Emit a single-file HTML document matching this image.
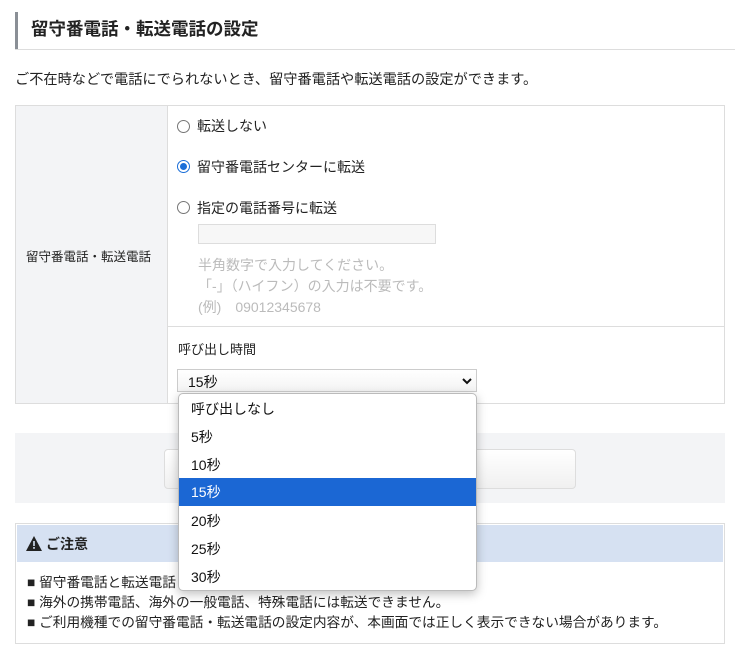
<!DOCTYPE html>
<html><head><meta charset="utf-8"><style>
*{margin:0;padding:0;box-sizing:border-box}
body{width:735px;height:653px;background:#fff;font-family:"Liberation Sans","Noto Sans CJK JP",sans-serif;color:#222;position:relative;overflow:hidden;font-size:14px}
.a{position:absolute;white-space:nowrap}
.radio{position:absolute;width:13px;height:13px;border:1px solid #767676;border-radius:50%;background:#fff}
.radio.on{border:1px solid #1a6ed8}
.radio.on::after{content:"";position:absolute;left:2px;top:2px;width:7px;height:7px;border-radius:50%;background:#1a6ed8}
.hint{color:#bbb;font-size:14px}
.opt{position:absolute;left:0;width:100%;height:28px;line-height:28px;padding-left:12px;font-size:14px;color:#111}
</style></head><body>
<div class="a" style="left:15px;top:12px;width:3px;height:38px;background:#8a8f96"></div>
<div class="a" style="left:15px;top:49px;width:720px;height:1px;background:#ddd"></div>
<div class="a" style="left:31px;top:16px;font-size:17.5px;font-weight:bold;color:#222">留守番電話・転送電話の設定</div>
<div class="a" style="left:15px;top:69px;font-size:14.2px">ご不在時などで電話にでられないとき、留守番電話や転送電話の設定ができます。</div>

<div class="a" style="left:15px;top:105px;width:710px;height:299px;border:1px solid #ddd"></div>
<div class="a" style="left:16px;top:106px;width:152px;height:297px;background:#f3f4f6;border-right:1px solid #ddd"></div>
<div class="a" style="left:26px;top:246px;font-size:12.5px">留守番電話・転送電話</div>
<div class="a" style="left:168px;top:326px;width:557px;height:1px;background:#ddd"></div>

<div class="radio" style="left:177px;top:120px"></div>
<div class="a" style="left:197px;top:116px">転送しない</div>
<div class="radio on" style="left:177px;top:160px"></div>
<div class="a" style="left:197px;top:157px">留守番電話センターに転送</div>
<div class="radio" style="left:177px;top:201px"></div>
<div class="a" style="left:197px;top:198px">指定の電話番号に転送</div>
<div class="a" style="left:198px;top:224px;width:238px;height:20px;border:1px solid #ddd;background:#f7f7f7"></div>
<div class="a hint" style="left:198px;top:255px">半角数字で入力してください。</div>
<div class="a hint" style="left:198px;top:276px">「-」（ハイフン）の入力は不要です。</div>
<div class="a hint" style="left:198px;top:297px">(例)　09012345678</div>

<div class="a" style="left:178px;top:339px;font-size:13px">呼び出し時間</div>
<div class="a" style="left:177px;top:369px;width:300px;height:23px;border:1px solid #ccc;background:linear-gradient(#fff,#f4f4f4)"></div>
<div class="a" style="left:188px;top:372px;font-size:14px;color:#111">15秒</div>
<svg class="a" style="left:462px;top:377px" width="10" height="8" viewBox="0 0 10 8"><path d="M1 2l4 4 4-4" stroke="#111" stroke-width="2" fill="none"/></svg>

<div class="a" style="left:15px;top:433px;width:710px;height:70px;background:#f3f4f6"></div>
<div class="a" style="left:164px;top:449px;width:412px;height:40px;border:1px solid #ddd;border-radius:4px;background:linear-gradient(#fff,#f0f0f0)"></div>

<div class="a" style="left:15px;top:523px;width:710px;height:121px;border:1px solid #ddd"></div>
<div class="a" style="left:17px;top:525px;width:706px;height:37px;background:#d6e1f2"></div>
<svg class="a" style="left:26px;top:536px" width="16" height="15" viewBox="0 0 16 15"><path d="M8 0L16 15H0Z" fill="#222"/><rect x="7.2" y="5" width="1.6" height="5" fill="#d6e1f2"/><rect x="7.2" y="11" width="1.6" height="1.8" fill="#d6e1f2"/></svg>
<div class="a" style="left:46px;top:534px;font-weight:bold;font-size:14px">ご注意</div>
<div class="a" style="left:27px;top:571px;font-size:13.7px">■ 留守番電話と転送電話</div>
<div class="a" style="left:27px;top:591px;font-size:13.7px">■ 海外の携帯電話、海外の一般電話、特殊電話には転送できません。</div>
<div class="a" style="left:27px;top:611px;font-size:13.7px">■ ご利用機種での留守番電話・転送電話の設定内容が、本画面では正しく表示できない場合があります。</div>

<div class="a" style="left:178px;top:393px;width:299px;height:198px;background:#fff;border:1px solid #bbb;border-radius:5px;box-shadow:0 3px 10px rgba(0,0,0,.25);overflow:hidden">
<div class="opt" style="top:1px">呼び出しなし</div>
<div class="opt" style="top:29px">5秒</div>
<div class="opt" style="top:57px">10秒</div>
<div class="opt" style="top:84px;background:#1b67d4;color:#fff">15秒</div>
<div class="opt" style="top:113px">20秒</div>
<div class="opt" style="top:141px">25秒</div>
<div class="opt" style="top:169px">30秒</div>
</div>
</body></html>
